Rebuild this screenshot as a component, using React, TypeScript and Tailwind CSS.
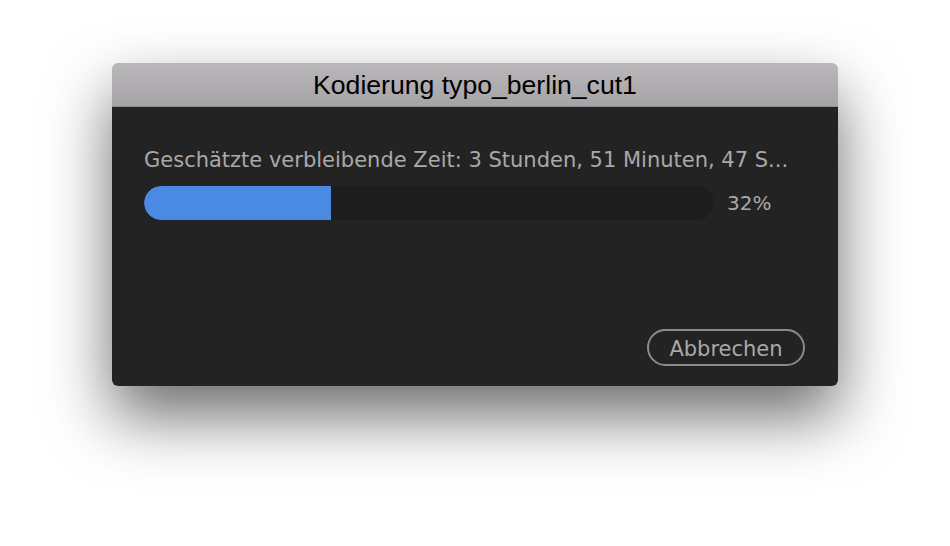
import React from "react";

export default function App() {
  const pct = 32;
  return (
    <div className="w-[950px] h-[546px] bg-white pl-[112px] pt-[63px]">
      <div className="w-[726px] h-[323px] rounded-[6px] overflow-hidden flex flex-col shadow-[0_30px_64px_rgba(0,0,0,0.58)]">
        <div
          className="h-[44px] shrink-0 flex items-center justify-center bg-gradient-to-b from-[#b9b7b9] to-[#a6a4a6] border-b border-[#8e8c8e] text-black text-[26.6px] leading-none pt-[1px]"
          style={{ fontFamily: '"Liberation Sans", Arial, sans-serif' }}
        >
          Kodierung typo_berlin_cut1
        </div>
        <div
          className="flex-1 bg-[#232323] flex flex-col pl-[32px] pr-[32px] pt-[40px] pb-[20px]"
          style={{ fontFamily: '"DejaVu Sans", Verdana, sans-serif' }}
        >
          <div className="text-[#a9a9a9] text-[21px] leading-[26px] whitespace-nowrap">
            Geschätzte verbleibende Zeit: 3 Stunden, 51 Minuten, 47 S...
          </div>
          <div className="flex items-center mt-[13px]">
            <div className="w-[570px] h-[34px] rounded-full bg-[#1d1d1d] overflow-hidden">
              <div
                className="h-full bg-[#4a8ae2] rounded-l-full"
                style={{ width: `${(187 / 570) * 100}%` }}
              />
            </div>
            <div className="ml-[13px] text-[#a9a9a9] text-[20px]">{pct}%</div>
          </div>
          <div className="flex-1" />
          <div className="flex justify-end pr-[1px]">
            <button className="w-[158px] h-[37px] rounded-full border-2 border-[#8a8a8a] text-[#a9a9a9] text-[21px] leading-none flex items-center justify-center pt-[3px]">
              Abbrechen
            </button>
          </div>
        </div>
      </div>
    </div>
  );
}
